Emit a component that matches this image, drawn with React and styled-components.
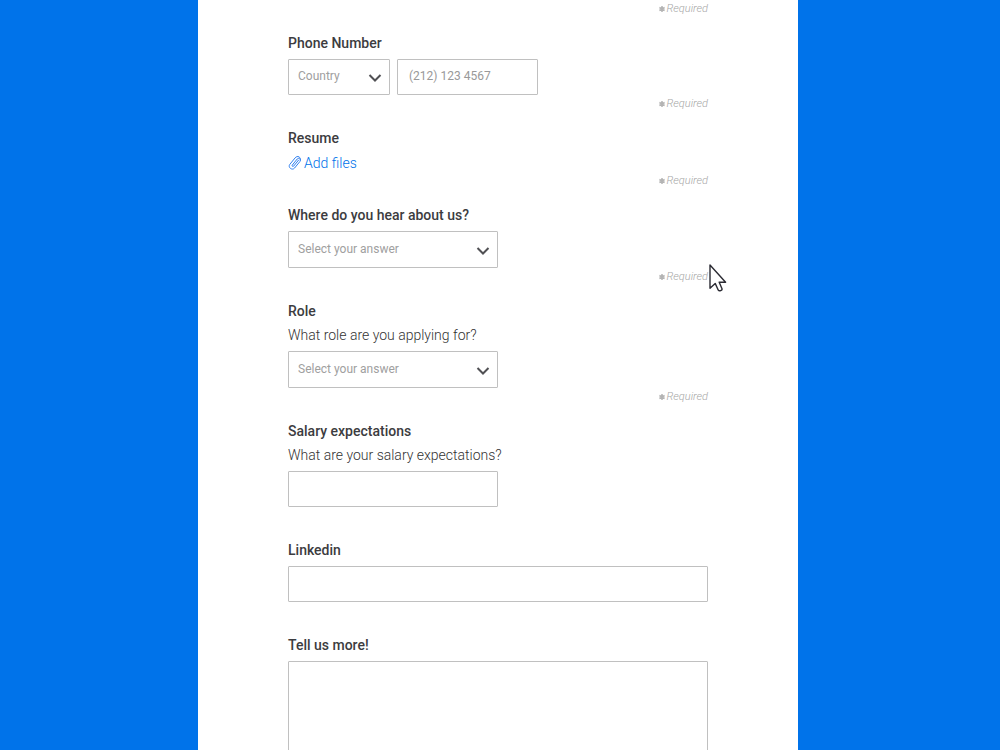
import styled, { createGlobalStyle } from "styled-components";

/** application form */
export default function App() {
    return (
        <Page>
            <GlobalStyle />
            <Sheet>
                <Form>
                    <Footer><Required /></Footer>

                    <Field title="Phone Number" htmlFor="phone" required>
                        <PhoneRow>
                            <Dropdown label="Country" placeholder="Country" width={102} />
                            <TextInput id="phone" type="tel" placeholder="(212) 123 4567" $width={141} />
                        </PhoneRow>
                    </Field>

                    <Field title="Resume" htmlFor="resume" required>
                        <AddFiles id="resume" type="button">
                            <ClipIcon />
                            Add files
                        </AddFiles>
                    </Field>

                    <Field title="Where do you hear about us?" htmlFor="source" required>
                        <Dropdown id="source" placeholder="Select your answer" width={210} />
                    </Field>

                    <Field title="Role" description="What role are you applying for?" htmlFor="role" required>
                        <Dropdown id="role" placeholder="Select your answer" width={210} />
                    </Field>

                    <Field title="Salary expectations" description="What are your salary expectations?" htmlFor="salary">
                        <TextInput id="salary" type="text" $width={210} />
                    </Field>

                    <Field title="Linkedin" htmlFor="linkedin">
                        <TextInput id="linkedin" type="text" />
                    </Field>

                    <Field title="Tell us more!" htmlFor="more">
                        <TextArea id="more" />
                    </Field>
                </Form>
            </Sheet>
            <Pointer />
        </Page>
    );
}

function Field({ title, description, htmlFor, required, children }) {
    return (
        <FieldContainer>
            <Title htmlFor={htmlFor}>{title}</Title>
            {description && <Description>{description}</Description>}
            {children}
            <Footer>{required && <Required />}</Footer>
        </FieldContainer>
    );
}

function Required() {
    return (
        <RequiredText>
            <Star viewBox="0 0 6 6" aria-hidden="true">
                <path d="M3 0v6M0.4 1.5l5.2 3M5.6 1.5l-5.2 3" />
            </Star>
            Required
        </RequiredText>
    );
}

function Dropdown({ id, label, placeholder, width }) {
    return (
        <SelectWrapper $width={width}>
            <Select id={id} aria-label={label} defaultValue="">
                <option value="">{placeholder}</option>
            </Select>
            <Chevron viewBox="0 0 14 10" aria-hidden="true">
                <path d="M1.5 2L7 7.5L12.5 2" />
            </Chevron>
        </SelectWrapper>
    );
}

function ClipIcon() {
    return (
        <Clip viewBox="0 0 14 16" aria-hidden="true">
            <path d="M10.5 5.2L5.6 11.2C4.9 12 3.6 11 4.3 10.1L9.2 4C10.7 2.3 13.5 4.4 12 6.4L6.6 13C4.2 15.9 -0.4 12.4 1.8 9.4L7 3C8 1.8 9.7 1 11 1.9C12.2 2.7 12.8 3.7 12.4 5.2" />
        </Clip>
    );
}

function Pointer() {
    return (
        <PointerIcon viewBox="0 0 18 28" aria-hidden="true">
            <path d="M1 1V24.3L6.2 19.4L9.3 26.2C10.2 27.5 13.6 26.4 13 24.7L10.2 18.2H16.6Z" />
        </PointerIcon>
    );
}

const GlobalStyle = createGlobalStyle`
    * {
        box-sizing: border-box;
    }

    body {
        margin: 0;
        background: #0073ea;
        font-family: Roboto, "Liberation Sans", sans-serif;
    }
`

const Page = styled.main`
    height: 100vh;
    overflow-y: auto;
    scrollbar-width: none;
    padding-right: 4px;
    background: #0073ea;
`

const Sheet = styled.div`
    max-width: 600px;
    min-height: 100%;
    margin: 0 auto;
    padding: 0 90px;
    background: #ffffff;
`

const Form = styled.form`
    display: flex;
    flex-direction: column;
`

const FieldContainer = styled.div`
    display: flex;
    flex-direction: column;
    align-items: flex-start;
`

const Title = styled.label`
    margin-bottom: 8px;
    font-size: 14px;
    font-weight: 500;
    line-height: 16px;
    color: #3c3c40;
`

const Description = styled.p`
    margin: 0 0 8px;
    font-size: 14px;
    font-weight: 300;
    line-height: 16px;
    color: #333333;
`

const Footer = styled.div`
    display: flex;
    align-self: stretch;
    justify-content: flex-end;
    height: 35px;
`

const RequiredText = styled.span`
    display: flex;
    align-items: center;
    gap: 2px;
    height: 17px;
    font-size: 11px;
    font-style: italic;
    font-weight: 300;
    color: #a6a6a6;
`

const Star = styled.svg`
    width: 6px;
    height: 6px;
    fill: none;
    stroke: #b4b4b4;
    stroke-width: 1.5;
`

const PhoneRow = styled.div`
    display: flex;
    gap: 7px;
`

const TextInput = styled.input`
    width: ${({ $width }) => ($width ? `${$width}px` : "100%")};
    height: 36px;
    padding: 0 11px 2px;
    border: 1px solid #c0c0c0;
    border-radius: 1px;
    outline: none;
    font-family: inherit;
    font-size: 12px;
    color: #333333;

    &::placeholder {
        color: #999999;
    }
`

const TextArea = styled.textarea`
    width: 100%;
    height: 140px;
    padding: 10px;
    border: 1px solid #c0c0c0;
    border-radius: 1px;
    outline: none;
    resize: none;
    font-family: inherit;
    font-size: 12px;
`

const SelectWrapper = styled.div`
    display: grid;
    align-items: center;
    width: ${({ $width }) => $width}px;
    height: ${({ $width }) => ($width > 200 ? 37 : 36)}px;

    > * {
        grid-area: 1 / 1;
    }
`

const Select = styled.select`
    width: 100%;
    height: 100%;
    padding: 0 28px 2px 9px;
    border: 1px solid #c0c0c0;
    border-radius: 1px;
    outline: none;
    appearance: none;
    background: #ffffff;
    font-family: inherit;
    font-size: 12px;
    color: #a0a0a0;
`

const Chevron = styled.svg`
    justify-self: end;
    width: 14px;
    height: 10px;
    margin: 2px 8px 0 0;
    fill: none;
    stroke: #505054;
    stroke-width: 2;
    pointer-events: none;
`

const AddFiles = styled.button`
    display: flex;
    align-items: center;
    gap: 2px;
    height: 18px;
    padding: 0;
    border: none;
    background: none;
    font-family: inherit;
    font-size: 14px;
    font-weight: 300;
    color: #0073ea;
    cursor: pointer;
`

const Clip = styled.svg`
    width: 14px;
    height: 16px;
    fill: none;
    stroke: #2f7ff0;
    stroke-width: 1;
    stroke-linecap: round;
`

const PointerIcon = styled.svg`
    position: absolute;
    top: 264px;
    left: 709px;
    width: 18px;
    height: 28px;
    fill: #ffffff;
    stroke: #2b2b33;
    stroke-width: 1.4;
    stroke-linejoin: round;
    pointer-events: none;
`
